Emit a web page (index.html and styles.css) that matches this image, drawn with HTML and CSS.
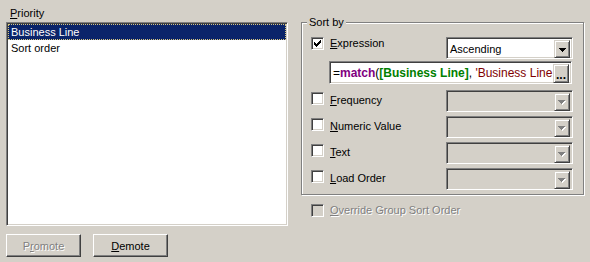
FILE: index.html
```html
<!DOCTYPE html>
<html lang="en">
<head>
<meta charset="UTF-8">
<title>Sort</title>
<link rel="stylesheet" href="styles.css">
</head>
<body>

<div class="dialog">

  <div class="priority">
    <div class="caption"><u>P</u>riority</div>
    <div class="listbox">
      <div class="item sel">Business Line</div>
      <div class="item">Sort order</div>
    </div>
    <div class="buttons">
      <button class="btn disabled">P<u>r</u>omote</button>
      <button class="btn"><u>D</u>emote</button>
    </div>
  </div>

  <div class="sortside">
    <div class="group">
      <div class="group-title">Sort by</div>

      <div class="row first">
        <div class="opt">
          <span class="check">
            <svg width="7" height="7" viewBox="0 0 7 7" shape-rendering="crispEdges"><path d="M0 2h1v3h-1zM1 3h1v3h-1zM2 4h1v3h-1zM3 3h1v3h-1zM4 2h1v3h-1zM5 1h1v3h-1zM6 0h1v3h-1z" fill="#000"/></svg>
          </span>
          <span class="opt-label"><u>E</u>xpression</span>
        </div>
        <div class="combo">
          <span class="combo-text">Ascending</span>
          <span class="drop">
            <svg width="7" height="4" viewBox="0 0 7 4" shape-rendering="crispEdges"><path d="M0 0h7v1h-1v1h-1v1h-1v1h-1v-1h-1v-1h-1v-1h-1z" fill="#000"/></svg>
          </span>
        </div>
      </div>

      <div class="exprfield">
        <span class="expr"><span class="op">=</span><span class="fn">match</span><span class="op">(</span><span class="fld">[Business Line]</span><span class="op">, </span><span class="str">'Business Line</span></span>
        <span class="dots">...</span>
      </div>

      <div class="row low gap">
        <div class="opt"><span class="check"></span><span class="opt-label"><u>F</u>requency</span></div>
        <div class="combo off"><span class="combo-text"></span><span class="drop"><svg width="8" height="5" viewBox="0 0 8 5" shape-rendering="crispEdges"><path d="M1 1h7v1h-1v1h-1v1h-1v1h-1v-1h-1v-1h-1v-1h-1z" fill="#fff"/><path d="M0 0h7v1h-1v1h-1v1h-1v1h-1v-1h-1v-1h-1v-1h-1z" fill="#808080"/></svg></span></div>
      </div>

      <div class="row low">
        <div class="opt"><span class="check"></span><span class="opt-label"><u>N</u>umeric Value</span></div>
        <div class="combo off"><span class="combo-text"></span><span class="drop"><svg width="8" height="5" viewBox="0 0 8 5" shape-rendering="crispEdges"><path d="M1 1h7v1h-1v1h-1v1h-1v1h-1v-1h-1v-1h-1v-1h-1z" fill="#fff"/><path d="M0 0h7v1h-1v1h-1v1h-1v1h-1v-1h-1v-1h-1v-1h-1z" fill="#808080"/></svg></span></div>
      </div>

      <div class="row low">
        <div class="opt"><span class="check"></span><span class="opt-label"><u>T</u>ext</span></div>
        <div class="combo off"><span class="combo-text"></span><span class="drop"><svg width="8" height="5" viewBox="0 0 8 5" shape-rendering="crispEdges"><path d="M1 1h7v1h-1v1h-1v1h-1v1h-1v-1h-1v-1h-1v-1h-1z" fill="#fff"/><path d="M0 0h7v1h-1v1h-1v1h-1v1h-1v-1h-1v-1h-1v-1h-1z" fill="#808080"/></svg></span></div>
      </div>

      <div class="row low">
        <div class="opt"><span class="check"></span><span class="opt-label"><u>L</u>oad Order</span></div>
        <div class="combo off"><span class="combo-text"></span><span class="drop"><svg width="8" height="5" viewBox="0 0 8 5" shape-rendering="crispEdges"><path d="M1 1h7v1h-1v1h-1v1h-1v1h-1v-1h-1v-1h-1v-1h-1z" fill="#fff"/><path d="M0 0h7v1h-1v1h-1v1h-1v1h-1v-1h-1v-1h-1v-1h-1z" fill="#808080"/></svg></span></div>
      </div>
    </div>

    <div class="opt override">
      <span class="check off"></span>
      <span class="opt-label disabled"><u>O</u>verride Group Sort Order</span>
    </div>
  </div>

</div>

</body>
</html>
```

FILE: styles.css
```css
body {
  margin: 0;
  width: 590px;
  height: 262px;
  background-color: #d4d0c8;
  font-family: "Liberation Sans", Arial, sans-serif;
  font-size: 11px;
  color: #000;
  overflow: hidden;
}
u {
  text-decoration-thickness: 1px;
  text-underline-offset: 1px;
}
.dialog {
  display: flex;
  padding-left: 6px;
}
.priority {
  width: 282px;
  display: flex;
  flex-direction: column;
}
.caption {
  padding: 7px 0 0 4px;
  line-height: 13px;
}
.listbox {
  margin-top: 2px;
  height: 204px;
  box-sizing: border-box;
  background: #fff;
  border: 1px solid;
  border-color: #808080 #fff #fff #808080;
  box-shadow: inset 1px 1px 0 #404040, inset -1px -1px 0 #d4d0c8;
  padding: 1px;
}
.item {
  height: 16px;
  line-height: 16px;
  padding-left: 3px;
  white-space: nowrap;
}
.item.sel {
  background: #0a246a;
  color: #fff;
  outline: 1px dotted #d8c880;
  outline-offset: -1px;
}
.buttons {
  display: flex;
  gap: 12px;
  margin-top: 8px;
}
.btn {
  width: 75px;
  height: 23px;
  box-sizing: border-box;
  background: #d4d0c8;
  border: 1px solid;
  border-color: #fff #404040 #404040 #fff;
  box-shadow: inset -1px -1px 0 #808080;
  font-family: inherit;
  font-size: 11px;
  color: #000;
  padding: 0;
}
.btn.disabled,
.disabled {
  color: #808080;
  text-shadow: 1px 1px 0 #fff;
}
.sortside {
  margin-left: 13px;
  width: 283px;
}
.group {
  margin-top: 22px;
  border: 1px solid #808080;
  box-shadow: inset 1px 1px 0 #fff, 1px 1px 0 #fff;
  padding: 0 10px 4px 9px;
}
.group-title {
  display: table;
  margin: -7px 0 0 -4px;
  padding: 0 2px;
  line-height: 13px;
  background: #d4d0c8;
}
.row {
  display: flex;
  justify-content: space-between;
  align-items: flex-start;
}
.row.first {
  margin-top: 8px;
}
.row.low {
  margin-top: 4px;
}
.row.low.gap {
  margin-top: 6px;
}
.opt {
  display: flex;
  align-items: flex-start;
  gap: 6px;
}
.row.low .opt {
  margin-top: 2px;
}
.row.low .opt-label {
  padding-top: 2px;
}
.opt-label {
  line-height: 13px;
  white-space: nowrap;
}
.check {
  width: 13px;
  height: 13px;
  box-sizing: border-box;
  background: #fff;
  border: 1px solid;
  border-color: #808080 #fff #fff #808080;
  box-shadow: inset 1px 1px 0 #404040, inset -1px -1px 0 #d4d0c8;
  display: flex;
  align-items: center;
  justify-content: center;
}
.check.off {
  background: #d4d0c8;
}
.combo {
  width: 127px;
  height: 22px;
  box-sizing: border-box;
  background: #fff;
  border: 1px solid;
  border-color: #808080 #fff #fff #808080;
  box-shadow: inset 1px 1px 0 #404040, inset -1px -1px 0 #d4d0c8;
  padding: 2px;
  display: flex;
}
.combo.off {
  background: #d4d0c8;
}
.combo-text {
  flex: 1;
  line-height: 18px;
  padding-left: 1px;
}
.drop {
  width: 16px;
  height: 18px;
  box-sizing: border-box;
  background: #d4d0c8;
  border: 1px solid;
  border-color: #d4d0c8 #404040 #404040 #d4d0c8;
  box-shadow: inset 1px 1px 0 #fff, inset -1px -1px 0 #808080;
  display: flex;
  align-items: center;
  justify-content: center;
  padding-top: 1px;
}
.exprfield {
  margin: 2px 1px 0 18px;
  height: 23px;
  box-sizing: border-box;
  background: #fff;
  border: 1px solid;
  border-color: #808080 #fff #fff #808080;
  box-shadow: inset 1px 1px 0 #404040, inset -1px -1px 0 #d4d0c8;
  padding: 2px 2px 2px 3px;
  display: flex;
}
.expr {
  flex: 1;
  white-space: nowrap;
  font-family: "Liberation Sans", Arial, sans-serif;
  font-size: 12px;
  line-height: 19px;
}
.op {
  color: #000;
}
.fn {
  color: #800080;
  font-weight: bold;
}
.fld {
  color: #008000;
  font-weight: bold;
}
.str {
  color: #800000;
}
.dots {
  width: 16px;
  height: 19px;
  box-sizing: border-box;
  background: #d4d0c8;
  border: 1px solid;
  border-color: #d4d0c8 #404040 #404040 #d4d0c8;
  box-shadow: inset 1px 1px 0 #fff, inset -1px -1px 0 #808080;
  font-weight: bold;
  font-size: 12px;
  line-height: 21px;
  text-align: center;
  letter-spacing: 0;
}
.override {
  margin: 9px 0 0 10px;
}
```
